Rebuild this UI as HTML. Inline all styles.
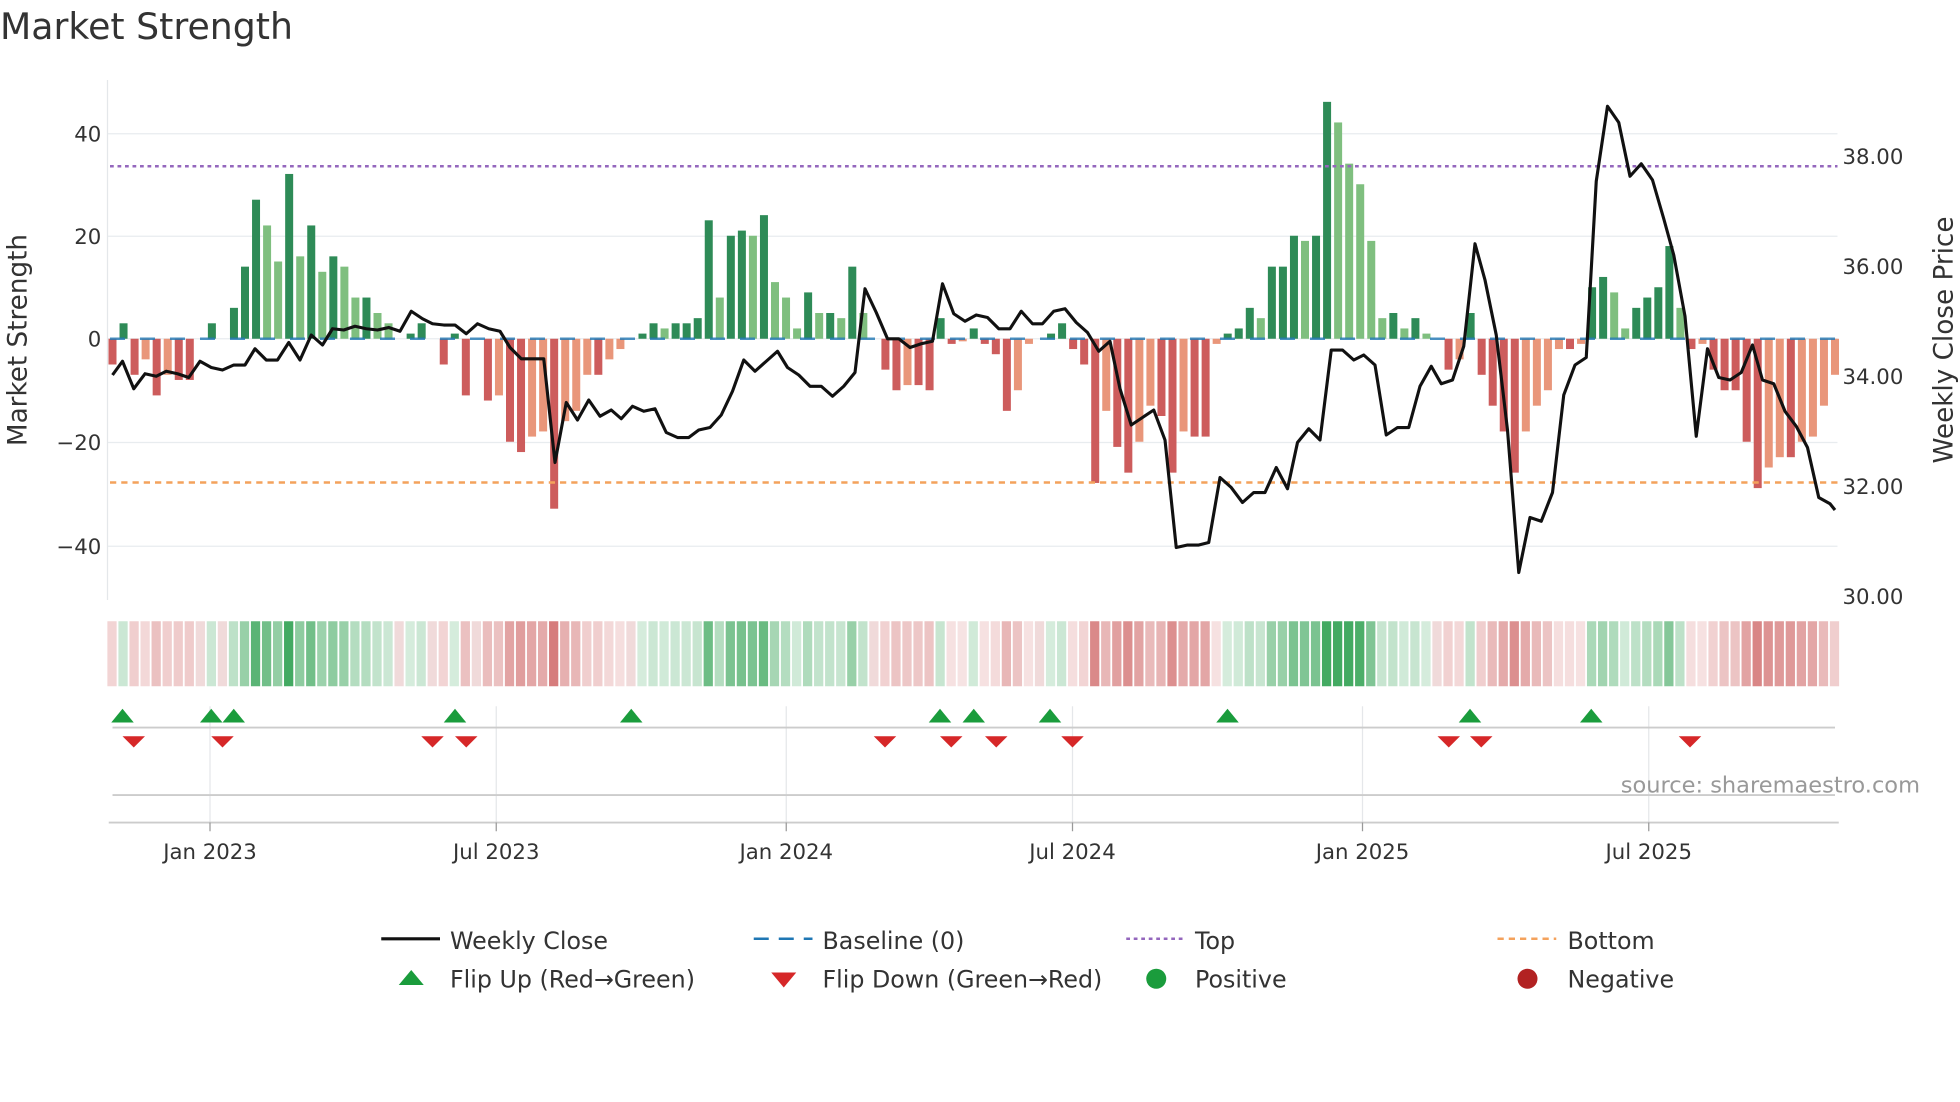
<!DOCTYPE html>
<html><head><meta charset="utf-8"><style>
html,body{margin:0;padding:0;background:#fff;width:1960px;height:1102px;overflow:hidden}
svg{display:block;font-family:"DejaVu Sans","Liberation Sans",sans-serif}
</style></head><body>
<svg id="s" width="1960" height="1102" viewBox="0 0 1568 881.6">
<text x="0" y="31" font-size="29" fill="#333">Market Strength</text>
<g stroke="#e8ecef" stroke-width="1">
<line x1="86" y1="107" x2="1470" y2="107"/><line x1="86" y1="189" x2="1470" y2="189"/><line x1="86" y1="271" x2="1470" y2="271"/><line x1="86" y1="354" x2="1470" y2="354"/><line x1="86" y1="437" x2="1470" y2="437"/>
</g>
<line x1="86" y1="64" x2="86" y2="480" stroke="#e4e7ea"/>
<g font-size="17" fill="#333" text-anchor="end">
<text x="81" y="113">40</text><text x="81" y="195">20</text><text x="81" y="277">0</text><text x="81" y="360">−20</text><text x="81" y="443">−40</text>
</g>
<g font-size="17" fill="#333">
<text x="1474" y="131">38.00</text><text x="1474" y="219">36.00</text><text x="1474" y="307">34.00</text><text x="1474" y="395">32.00</text><text x="1474" y="483">30.00</text>
</g>
<text transform="translate(21,272) rotate(-90)" font-size="21" fill="#333" text-anchor="middle">Market Strength</text>
<text transform="translate(1562,272) rotate(-90)" font-size="21" fill="#333" text-anchor="middle">Weekly Close Price</text>
<g id="bars"></g>
<line x1="88" y1="271" x2="1470" y2="271" stroke="#1f77b4" stroke-width="2" stroke-dasharray="12,12" opacity="0.8"/>
<line x1="88" y1="133" x2="1470" y2="133" stroke="#9467bd" stroke-width="2" stroke-dasharray="3,3"/>
<line x1="88" y1="386" x2="1470" y2="386" stroke="#f4a25c" stroke-width="2" stroke-dasharray="5,4"/>
<polyline id="price" fill="none" stroke="#111" stroke-width="2.5" stroke-linejoin="round"/>
<g id="heat"></g>
<g stroke="#e5e7ea"><line x1="168" y1="565" x2="168" y2="658"/><line x1="397" y1="565" x2="397" y2="658"/><line x1="629" y1="565" x2="629" y2="658"/><line x1="858" y1="565" x2="858" y2="658"/><line x1="1090" y1="565" x2="1090" y2="658"/><line x1="1319" y1="565" x2="1319" y2="658"/></g>
<line x1="90" y1="582" x2="1468" y2="582" stroke="#ccc" stroke-width="1.5"/>
<line x1="90" y1="636" x2="1468" y2="636" stroke="#ccc" stroke-width="1.5"/>
<line x1="87" y1="658" x2="1471" y2="658" stroke="#ccc" stroke-width="1.5"/>
<g stroke="#999"><line x1="168" y1="658" x2="168" y2="665"/><line x1="397" y1="658" x2="397" y2="665"/><line x1="629" y1="658" x2="629" y2="665"/><line x1="858" y1="658" x2="858" y2="665"/><line x1="1090" y1="658" x2="1090" y2="665"/><line x1="1319" y1="658" x2="1319" y2="665"/></g>
<g font-size="17" fill="#333" text-anchor="middle">
<text x="168" y="687">Jan 2023</text><text x="397" y="687">Jul 2023</text><text x="629" y="687">Jan 2024</text><text x="858" y="687">Jul 2024</text><text x="1090" y="687">Jan 2025</text><text x="1319" y="687">Jul 2025</text>
</g>
<g id="tri"></g>
<text x="1536" y="634" font-size="18" fill="#999" text-anchor="end">source: sharemaestro.com</text>
<g font-size="19" fill="#333">
<line x1="305" y1="751" x2="352" y2="751" stroke="#111" stroke-width="2.5"/><text x="360" y="759">Weekly Close</text>
<line x1="603" y1="751" x2="650" y2="751" stroke="#1f77b4" stroke-width="2" stroke-dasharray="12,8"/><text x="658" y="759">Baseline (0)</text>
<line x1="901" y1="751" x2="948" y2="751" stroke="#9467bd" stroke-width="2" stroke-dasharray="3,3"/><text x="956" y="759">Top</text>
<line x1="1198" y1="751" x2="1245" y2="751" stroke="#f4a25c" stroke-width="2" stroke-dasharray="5,4"/><text x="1254" y="759">Bottom</text>
<polygon points="319,788 329,776 339,788" fill="#1a9c3c"/><text x="360" y="790">Flip Up (Red→Green)</text>
<polygon points="617,778 637,778 627,790" fill="#d62728"/><text x="658" y="790">Flip Down (Green→Red)</text>
<circle cx="925" cy="783" r="8" fill="#1a9c3c"/><text x="956" y="790">Positive</text>
<circle cx="1222" cy="783" r="8" fill="#b22222"/><text x="1254" y="790">Negative</text>
</g>
</svg>
<script>
var v=[-5,3,-7,-4,-11,-7,-8,-8,0,3,0,6,14,27,22,15,32,16,22,13,16,14,8,8,5,3,0,1,3,0,-5,1,-11,0,-12,-11,-20,-22,-19,-18,-33,-16,-14,-7,-7,-4,-2,0,1,3,2,3,3,4,23,8,20,21,20,24,11,8,2,9,5,5,4,14,5,0,-6,-10,-9,-9,-10,4,-1,-0.5,2,-1,-3,-14,-10,-1,0,1,3,-2,-5,-28,-14,-21,-26,-20,-13,-15,-26,-18,-19,-19,-1,1,2,6,4,14,14,20,19,20,46,42,34,30,19,4,5,2,4,1,0,-6,-4,5,-7,-13,-18,-26,-18,-13,-10,-2,-2,-1,10,12,9,2,6,8,10,18,6,-2,-1,-6,-10,-10,-20,-29,-25,-23,-23,-20,-19,-13,-7];
var NS="http://www.w3.org/2000/svg",bars=document.getElementById('bars'),heat=document.getElementById('heat');
var step=(1468-90)/(v.length-1);
function el(t,a,p){var e=document.createElementNS(NS,t);for(var k in a)e.setAttribute(k,a[k]);p.appendChild(e);}
function mix(c,t){return 'rgb('+c.map(function(x){return Math.round(255+(x-255)*t)}).join(',')+')';}
for(var i=0;i<v.length;i++){var x=90+i*step,val=v[i],p=i?v[i-1]:0,h=Math.abs(val)*4.12,col;
 if(val>=0)col=(val>=p)?'#2e8b57':'#7fbf7f';else col=(val<=p)?'#cd5c5c':'#e9967a';
 if(h>0.5)el('rect',{x:x-3.2,y:val>=0?271-h:271,width:6.4,height:h,fill:col},bars);
 var t=Math.min(1,0.2+Math.abs(val)/40);
 var hc=val>0?mix([46,160,80],t*0.9):val<0?mix([200,80,80],t*0.75):'#f0dada';
 el('rect',{x:x-4.1,y:497,width:7.4,height:52,fill:hc},heat);}
var P=[90,300,98,289,107,311,116,299,125,301,133,297,142,299,151,302,160,289,169,294,178,296,187,292,196,292,204,279,213,288,222,288,231,274,240,288,249,268,258,276,266,263,275,264,284,261,293,263,302,264,311,262,320,265,329,249,338,255,346,259,355,260,364,260,373,267,382,259,391,263,400,265,408,278,417,287,426,287,435,287,444,370,453,322,462,336,471,320,480,333,489,328,497,335,506,325,515,329,524,327,533,346,542,350,551,350,559,344,568,342,577,332,586,313,595,288,604,297,613,289,622,281,630,294,639,300,648,309,657,309,666,317,675,309,684,298,692,231,701,250,710,271,719,271,728,278,737,275,746,273,754,227,763,251,772,257,781,252,790,254,799,263,808,263,817,249,826,259,834,259,843,249,852,247,861,258,870,266,879,281,888,273,896,311,905,340,914,334,923,328,932,352,941,438,950,436,959,436,967,434,976,382,985,390,994,402,1003,394,1012,394,1021,374,1030,391,1038,354,1047,343,1056,352,1065,280,1074,280,1083,288,1091,284,1100,292,1109,348,1118,342,1127,342,1136,309,1145,293,1153,307,1162,304,1171,277,1180,195,1188,224,1197,268,1206,344,1215,458,1224,414,1233,417,1242,394,1251,316,1260,292,1269,286,1277,145,1286,85,1295,98,1304,141,1313,131,1322,144,1331,175,1339,204,1348,253,1357,349,1366,279,1375,302,1384,304,1393,298,1402,276,1410,304,1419,307,1428,329,1437,341,1446,358,1455,398,1464,403,1468,408];
var s='';for(var j=0;j<P.length;j+=2)s+=P[j]+','+P[j+1]+' ';document.getElementById('price').setAttribute('points',s);
var tri=document.getElementById('tri');
[98,169,187,364,505,752,779,840,982,1176,1273].forEach(function(x){el('polygon',{points:(x-9)+',578 '+x+',567 '+(x+9)+',578',fill:'#1a9c3c'},tri);});
[107,178,346,373,708,761,797,858,1159,1185,1352].forEach(function(x){el('polygon',{points:(x-9)+',589 '+(x+9)+',589 '+x+',598',fill:'#d62728'},tri);});
</script>
</body></html>
